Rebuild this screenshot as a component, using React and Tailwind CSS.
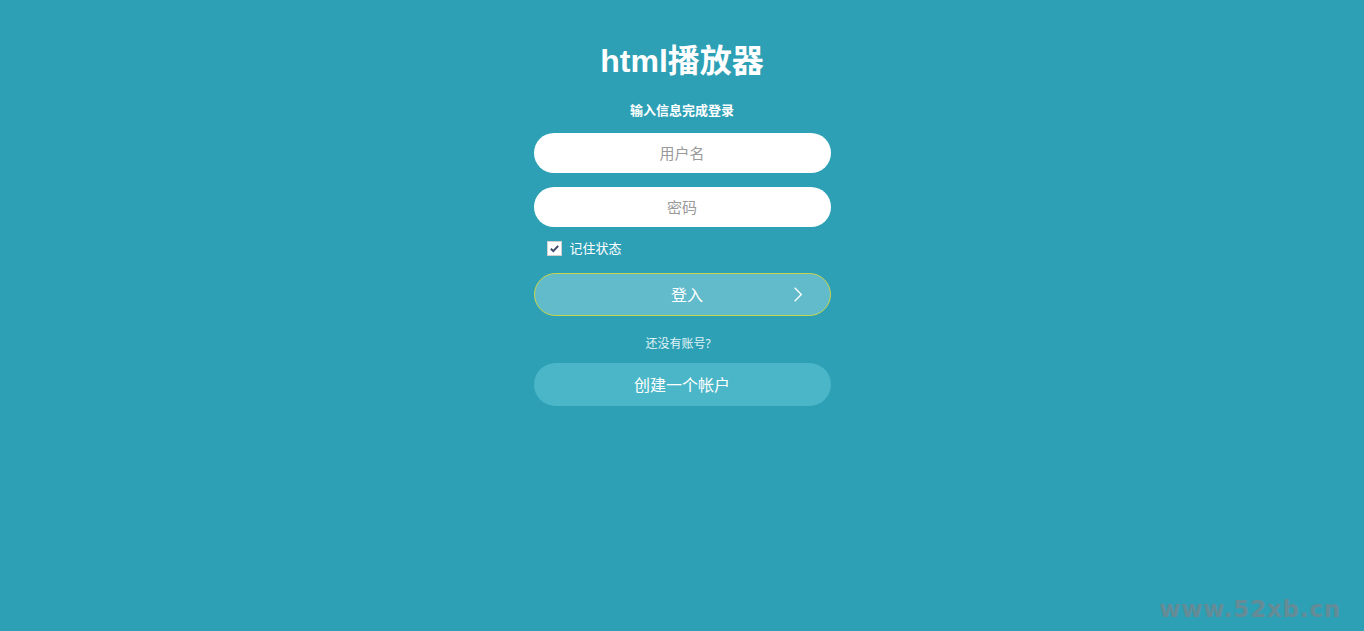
import { useState } from 'react';

export default function App() {
    const [remember, setRemember] = useState(true);

    return (
        <div
            className="relative min-h-[631px] w-full bg-[#2ea0b5] text-white"
            style={{ fontFamily: '"Noto Sans", "Noto Sans CJK SC", sans-serif' }}
        >
            <div className="mx-auto flex w-[297px] flex-col items-center pt-[38px]">
                {/* Judul */}
                <h1
                    className="text-[32px] font-bold leading-[46px]"
                    style={{ fontFamily: '"Liberation Sans", "Noto Sans CJK SC", sans-serif' }}
                >
                    html播放器
                </h1>
                <p className="mt-[16px] text-[13px] font-bold leading-[20px]">输入信息完成登录</p>

                {/* Form login */}
                <input
                    type="text"
                    placeholder="用户名"
                    className="mt-[13px] h-[40px] w-full rounded-full bg-white text-center text-[15px] text-gray-700 outline-none placeholder:text-[#9a9a9a]"
                />
                <input
                    type="password"
                    placeholder="密码"
                    className="mt-[14px] h-[40px] w-full rounded-full bg-white text-center text-[15px] text-gray-700 outline-none placeholder:text-[#9a9a9a]"
                />

                <label className="mt-[13px] flex w-full items-center gap-[8px] pl-[13px] text-[13px] leading-[16px]">
                    <span
                        onClick={() => setRemember(!remember)}
                        className="flex h-[15px] w-[15px] items-center justify-center border border-[#d0d0d0] bg-white"
                    >
                        {remember && (
                            <svg viewBox="0 0 12 12" className="h-[11px] w-[11px]">
                                <path d="M2 6.3l2.7 2.6L10 3.2" fill="none" stroke="#3d4a6b" strokeWidth="2.2" />
                            </svg>
                        )}
                    </span>
                    记住状态
                </label>

                <button className="relative mt-[17px] flex h-[43px] w-full items-center justify-center rounded-full border border-[#c9d64a] bg-[#62bbcb] text-[16px]">
                    <span className="ml-[10px]">登入</span>
                    <svg viewBox="0 0 12 20" className="absolute right-[27px] h-[17px] w-[10px]">
                        <path d="M2 2l8 8-8 8" fill="none" stroke="white" strokeWidth="1.6" />
                    </svg>
                </button>

                <p className="mt-[19px] mr-[8px] text-[12px] leading-[18px] text-[#e0f4f7]">还没有账号?</p>

                <button className="mt-[10px] h-[43px] w-full rounded-full bg-[#4ab6c8] text-[16px]">
                    创建一个帐户
                </button>
            </div>

            {/* Watermark */}
            <div
                className="absolute bottom-[8px] right-[23px] text-[23px] font-bold leading-[28px] tracking-[0.8px] text-[#658b96]"
                style={{ fontFamily: '"DejaVu Sans", sans-serif' }}
            >
                www.52xb.cn
            </div>
        </div>
    );
}
